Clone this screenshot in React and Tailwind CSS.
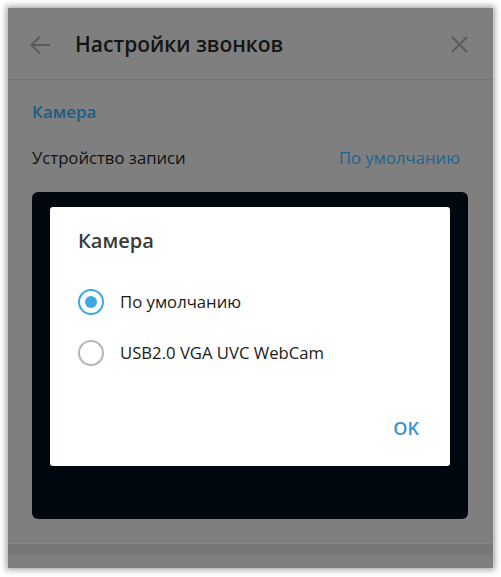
import React from "react";

export default function App() {
  return (
    <div className="w-[501px] h-[577px] bg-white p-[8px] pb-[9px]" style={{ fontFamily: '"Open Sans", "Noto Sans", sans-serif' }}>
      <div className="relative w-[485px] h-[560px] bg-[#7f7f7f] shadow-[0_0_6px_2px_rgba(0,0,0,0.35)] flex flex-col">
        {/* header */}
        <div className="h-[72px] flex items-center border-b border-[#737373] shrink-0">
          <div className="w-[67px] pl-[22px] flex items-center pt-[2px]">
            <svg width="20" height="18" viewBox="0 0 20 18" fill="none" stroke="#5a5a5a" strokeWidth="2" strokeLinecap="square">
              <path d="M2 9h17" />
              <path d="M9 1.5 1.5 9 9 16.5" />
            </svg>
          </div>
          <div className="flex-1 text-[21px] text-[#141414] font-semibold leading-none pt-[2px]">Настройки звонков</div>
          <div className="pr-[25px] pt-[2px]">
            <svg width="17" height="17" viewBox="0 0 17 17" fill="none" stroke="#5a5a5a" strokeWidth="2">
              <path d="M1 1l15 15M16 1 1 16" />
            </svg>
          </div>
        </div>
        {/* body */}
        <div className="flex-1 flex flex-col px-[24px]">
          <div className="pt-[22px] text-[17px] font-semibold text-[#1a5e86] leading-[20px]">Камера</div>
          <div className="mt-[26px] flex justify-between text-[16.7px] leading-[20px]">
            <span className="text-[#111]">Устройство записи</span>
            <span className="text-[#1c6690] mr-[9px]">По умолчанию</span>
          </div>
          <div className="mt-[24px] h-[327px] w-[436px] rounded-[6px] bg-[#020810] pt-[15px] pl-[18px]">
            <div className="w-[400px] h-[259px] bg-white rounded-[3px] flex flex-col pl-[28px] pr-[31px]">
              <div className="pt-[22px] text-[20px] font-semibold text-[#3a3a3a] leading-[24px]">Камера</div>
              <div className="mt-[36px] flex items-center gap-[16px]">
                <div className="w-[26px] h-[26px] rounded-full border-2 border-[#40a7e3] flex items-center justify-center">
                  <div className="w-[12px] h-[12px] rounded-full bg-[#40a7e3]" />
                </div>
                <span className="text-[16.7px] text-[#1a1a1a]">По умолчанию</span>
              </div>
              <div className="mt-[25px] flex items-center gap-[16px]">
                <div className="w-[26px] h-[26px] rounded-full border-2 border-[#b5b5b5]" />
                <span className="text-[16.7px] text-[#1a1a1a]">USB2.0 VGA UVC WebCam</span>
              </div>
              <div className="mt-[49px] flex justify-end">
                <span className="text-[18px] font-semibold text-[#3a91d2]">OK</span>
              </div>
            </div>
          </div>
        </div>
        <div className="h-[12px] bg-[#777] border-t border-[#888] mb-[13px] shrink-0" />
      </div>
    </div>
  );
}
